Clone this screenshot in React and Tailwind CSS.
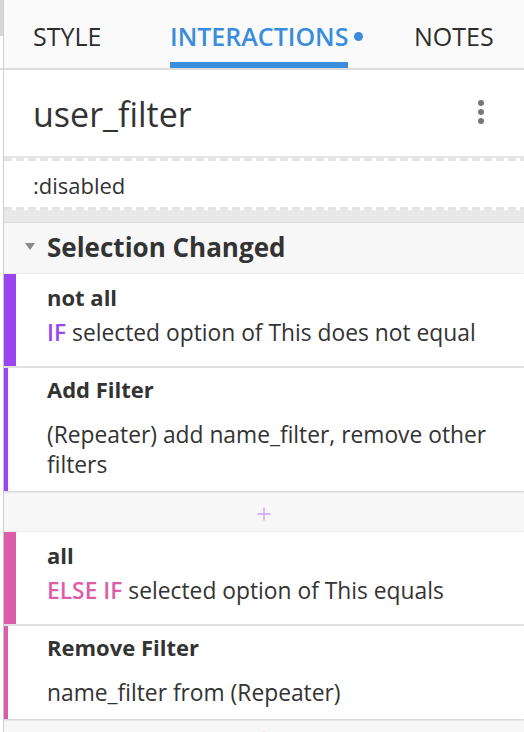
import React from "react";

const Dashes = () => (
  <div className="h-[3px] shrink-0 bg-[image:repeating-linear-gradient(90deg,#e4e4e4_0_8px,#ffffff_8px_12px)]" />
);

const Plus = ({ color }) => (
  <svg width="14" height="14" viewBox="0 0 14 14">
    <path d="M7 0.5V13.5M0.5 7H13.5" stroke={color} strokeWidth="1.3" fill="none" />
  </svg>
);

const CaseCard = ({ bar, title, keyword, keywordColor, text }) => (
  <div className={`h-[92px] shrink-0 bg-white border-l-[12px] ${bar} pl-[31px] pr-4 pt-2 shadow-[0_0_2px_rgba(0,0,0,0.12)]`}>
    <div className="text-[22px] leading-[30px] font-bold text-[#333]">{title}</div>
    <div className="mt-[6px] text-[22.8px] leading-[30px] text-[#333] whitespace-nowrap">
      <span className={`font-semibold ${keywordColor}`}>{keyword}</span> {text}
    </div>
  </div>
);

const ActionCard = ({ bar, title, text }) => (
  <div className={`shrink-0 bg-white border-l-4 ${bar} pl-[39px] pr-4 pt-[6px] pb-[11px] shadow-[0_1px_2px_rgba(0,0,0,0.18)]`}>
    <div className="text-[22px] leading-[30px] font-bold text-[#333]">{title}</div>
    <div className="mt-4 text-[22.8px] leading-[30px] text-[#333]">{text}</div>
  </div>
);

const Tab = ({ label, active, width }) => (
  <div className={`${width} h-full flex items-end shrink-0`}>
    <span
      className={`relative leading-[34px] pb-[9px] border-b-[6px] text-[25px] ${
        active ? "border-[#3a8ddd] text-[#3a8ddd] font-semibold" : "border-transparent text-[#2e2e2e]"
      }`}
    >
      {label}
      {active && (
        <span className="absolute right-[-15px] top-[13px] w-[9px] h-[9px] rounded-full bg-[#3a8ddd]" />
      )}
    </span>
  </div>
);

export default function App() {
  return (
    <div className="w-[524px] h-[732px] overflow-hidden flex bg-white font-['Open_Sans',sans-serif]">
      <div className="w-[3px] flex flex-col shrink-0">
        <div className="h-[36px] bg-[#d6d6d6]" />
        <div className="h-[32px]" />
        <div className="h-[2px] bg-[#dcdcdc]" />
      </div>
      <div className="flex-1 flex flex-col border-l border-[#cfcfcf] min-w-0">
        <div className="h-[70px] bg-[#fafafa] border-b-2 border-[#dcdcdc] flex pl-[29px] shrink-0">
          <Tab label="STYLE" width="w-[137px]" />
          <Tab label="INTERACTIONS" width="w-[244px]" active />
          <Tab label="NOTES" width="w-[100px]" />
        </div>

        <div className="h-[86px] flex items-center justify-between pl-[29px] pr-[40px] shrink-0">
          <span className="pt-[2px] text-[34px] leading-[40px] text-[#333]">user_filter</span>
          <div className="flex flex-col gap-[3px] mb-[3px]">
            <span className="w-[6px] h-[6px] rounded-full bg-[#787878]" />
            <span className="w-[6px] h-[6px] rounded-full bg-[#787878]" />
            <span className="w-[6px] h-[6px] rounded-full bg-[#787878]" />
          </div>
        </div>

        <div className="h-[2px] bg-[#e6e6e6] shrink-0" />
        <Dashes />
        <div className="h-[46px] flex items-center pl-[29px] shrink-0">
          <span className="pt-[2px] text-[22px] leading-[30px] text-[#333]">:disabled</span>
        </div>
        <Dashes />
        <div className="h-[12px] bg-[#e8e8e8] shrink-0" />
        <div className="h-px bg-[#d9d9d9] shrink-0" />

        <div className="shrink-0 bg-[#f7f7f7] flex flex-col">
          <div className="h-[51px] flex items-center pl-[21px] pb-[4px] shrink-0">
            <svg width="10" height="7" viewBox="0 0 10 7" className="mr-3">
              <path d="M0 0H10L5 7Z" fill="#8a8a8a" />
            </svg>
            <span className="text-[26px] leading-[34px] font-bold text-[#333]">Selection Changed</span>
          </div>

          <CaseCard
            bar="border-[#9a46ef]"
            title="not all"
            keyword="IF"
            keywordColor="text-[#9a46ef]"
            text="selected option of This does not equal"
          />
          <div className="h-[2px] shrink-0 bg-[#e2e2e2]" />
          <ActionCard
            bar="border-[#9a46ef]"
            title="Add Filter"
            text="(Repeater) add name_filter, remove other filters"
          />

          <div className="h-[41px] flex justify-center pt-[16px] shrink-0">
            <Plus color="#c9a2f4" />
          </div>

          <CaseCard
            bar="border-[#dc5ea9]"
            title="all"
            keyword="ELSE IF"
            keywordColor="text-[#dc5ea9]"
            text="selected option of This equals"
          />
          <div className="h-[2px] shrink-0 bg-[#e2e2e2]" />
          <ActionCard bar="border-[#dc5ea9]" title="Remove Filter" text="name_filter from (Repeater)" />

          <div className="h-[41px] flex justify-center pt-[12px] shrink-0">
            <Plus color="#eeaad2" />
          </div>
        </div>
      </div>
    </div>
  );
}
